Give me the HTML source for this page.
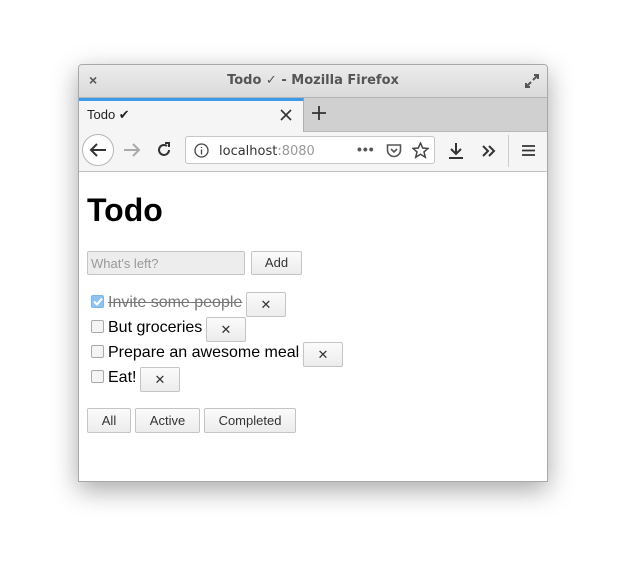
<!DOCTYPE html><html><head><style>
body{margin:0;width:626px;height:574px;background:#fff;position:relative;overflow:hidden;font-family:"Liberation Sans",sans-serif}
.win{position:absolute;left:78px;top:64px;width:468px;height:416px;background:#fff;border:1px solid #a8a8a8;border-radius:4px 4px 0 0;box-shadow:0 8px 26px rgba(0,0,0,.35);overflow:hidden}
.a{position:absolute}
.title{left:0;top:0;width:468px;height:32px;background:linear-gradient(#ececec,#dadada);border-bottom:1px solid #b5b5b5;font:bold 13px "DejaVu Sans",sans-serif;color:#555;text-align:center;line-height:31px}
.tabs{left:0;top:33px;width:468px;height:33px;background:#d0d0d0;border-bottom:1px solid #b8b8b8}
.tab{left:0;top:33px;width:225px;height:34px;background:#f5f5f5;border-top:3px solid #3d9ae8;box-sizing:border-box;border-right:1px solid #b0b0b0}
.nav{left:0;top:67px;width:468px;height:39px;background:#f5f5f5;border-bottom:1px solid #c0c0c0}
.url{left:106px;top:71px;width:250px;height:28px;background:#fff;border:1px solid #c6c6c6;border-radius:3px;box-sizing:border-box}
.btn{position:absolute;border:1px solid #c4c4c4;border-radius:2px;background:linear-gradient(#fbfbfb,#ececec);box-sizing:border-box;font:13px "Liberation Sans",sans-serif;color:#333;text-align:center}
.cb{position:absolute;width:13px;height:13px;border:1px solid #aaa;border-radius:2px;box-sizing:border-box;background:#f4f4f4}
.t{position:absolute;font-size:16px;color:#000}
</style></head><body>
<div class="win">
<div class="a title">Todo ✓ - Mozilla Firefox</div>
<div class="a" style="left:10px;top:7px;font:bold 14px sans-serif;color:#555">×</div>
<svg class="a" style="left:446px;top:9px" width="14" height="14" viewBox="0 0 14 14" fill="none" stroke="#555" stroke-width="2"><path d="M8 6l5-5M9 1h4v4M6 8l-5 5M1 9v4h4"/></svg>
<div class="a tabs"></div>
<div class="a tab"></div>
<div class="a" style="left:8px;top:42px;font:13px 'Liberation Sans',sans-serif;color:#222">Todo ✔</div>
<svg class="a" style="left:201px;top:44px" width="12" height="12" stroke="#333" stroke-width="1.6"><path d="M1 1l10 10M11 1L1 11"/></svg>
<svg class="a" style="left:233px;top:41px" width="14" height="14" stroke="#333" stroke-width="1.8"><path d="M7 0v14M0 7h14"/></svg>
<div class="a nav"></div>
<div class="a" style="left:3px;top:69px;width:32px;height:32px;border:1px solid #b5b5b5;border-radius:50%;background:#fff;box-sizing:border-box"></div>
<svg class="a" style="left:10px;top:77px" width="18" height="16" fill="none" stroke="#333" stroke-width="2"><path d="M17 8H2M8 2L2 8l6 6"/></svg>
<svg class="a" style="left:44px;top:77px" width="18" height="16" fill="none" stroke="#aaa" stroke-width="2"><path d="M1 8h15M10 2l6 6-6 6"/></svg>
<svg class="a" style="left:77px;top:77px" width="16" height="16" fill="none" stroke="#333" stroke-width="2"><path d="M13 8a5 5 0 1 1-2-4"/><path d="M9 1h4v4" /></svg>
<div class="a url"></div>
<svg class="a" style="left:115px;top:78px" width="15" height="15" fill="none" stroke="#444" stroke-width="1.3"><circle cx="7.5" cy="7.5" r="6.5"/><path d="M7.5 6.5v5M7.5 4v1"/></svg>
<div class="a" style="left:140px;top:79px;font:13px 'DejaVu Sans',sans-serif;color:#333">localhost<span style="color:#999">:8080</span></div>
<div class="a" style="left:278px;top:76px;font:bold 14px sans-serif;color:#555;letter-spacing:1px">•••</div>
<svg class="a" style="left:307px;top:78px" width="16" height="15" fill="none" stroke="#555" stroke-width="1.6"><path d="M1.5 2h13v5a6.5 6.5 0 0 1-13 0z"/><path d="M5 6l3 3 3-3"/></svg>
<svg class="a" style="left:333px;top:77px" width="17" height="17" fill="none" stroke="#444" stroke-width="1.5"><path d="M8.5 1l2.2 5 5.3.4-4 3.5 1.3 5.3-4.8-3-4.8 3 1.3-5.3-4-3.5 5.3-.4z"/></svg>
<svg class="a" style="left:369px;top:78px" width="16" height="16" fill="none" stroke="#333" stroke-width="2"><path d="M8 0v10M3 6l5 5 5-5M1 15h14"/></svg>
<svg class="a" style="left:402px;top:79px" width="16" height="14" fill="none" stroke="#333" stroke-width="2"><path d="M2 2l5 5-5 5M8 2l5 5-5 5"/></svg>
<div class="a" style="left:429px;top:70px;width:1px;height:32px;background:#ccc"></div>
<svg class="a" style="left:443px;top:79px" width="13" height="13" stroke="#333" stroke-width="1.8"><path d="M0 2h13M0 6.5h13M0 11h13"/></svg>

<div class="a" style="left:8px;top:127px;font:bold 32px 'Liberation Sans',sans-serif;color:#000">Todo</div>
<div class="a" style="left:8px;top:186px;width:158px;height:24px;border:1px solid #c4c4c4;border-radius:2px;background:#ededed;box-sizing:border-box;font:13px 'Liberation Sans',sans-serif;color:#999;padding:4px 3px">What's left?</div>
<div class="btn" style="left:172px;top:186px;width:51px;height:24px;line-height:22px">Add</div>

<div class="cb" style="left:12px;top:230px;background:#8ec3f0;border-color:#7fb6e8"><svg width="11" height="11" style="position:absolute;left:0;top:0" fill="none" stroke="#fff" stroke-width="2"><path d="M2 5.5l3 3 5-6"/></svg></div>
<div class="t" style="left:29px;top:229px;color:#777;text-decoration:line-through">Invite some people</div>
<div class="btn" style="left:167px;top:227px;width:40px;height:25px;line-height:23px">✕</div>
<div class="cb" style="left:12px;top:255px"></div>
<div class="t" style="left:29px;top:254px">But groceries</div>
<div class="btn" style="left:127px;top:252px;width:40px;height:25px;line-height:23px">✕</div>
<div class="cb" style="left:12px;top:280px"></div>
<div class="t" style="left:29px;top:279px">Prepare an awesome meal</div>
<div class="btn" style="left:224px;top:277px;width:40px;height:25px;line-height:23px">✕</div>
<div class="cb" style="left:12px;top:305px"></div>
<div class="t" style="left:29px;top:304px">Eat!</div>
<div class="btn" style="left:61px;top:302px;width:40px;height:25px;line-height:23px">✕</div>

<div class="btn" style="left:8px;top:343px;width:44px;height:25px;line-height:23px">All</div>
<div class="btn" style="left:56px;top:343px;width:65px;height:25px;line-height:23px">Active</div>
<div class="btn" style="left:125px;top:343px;width:92px;height:25px;line-height:23px">Completed</div>
</div>
</body></html>
